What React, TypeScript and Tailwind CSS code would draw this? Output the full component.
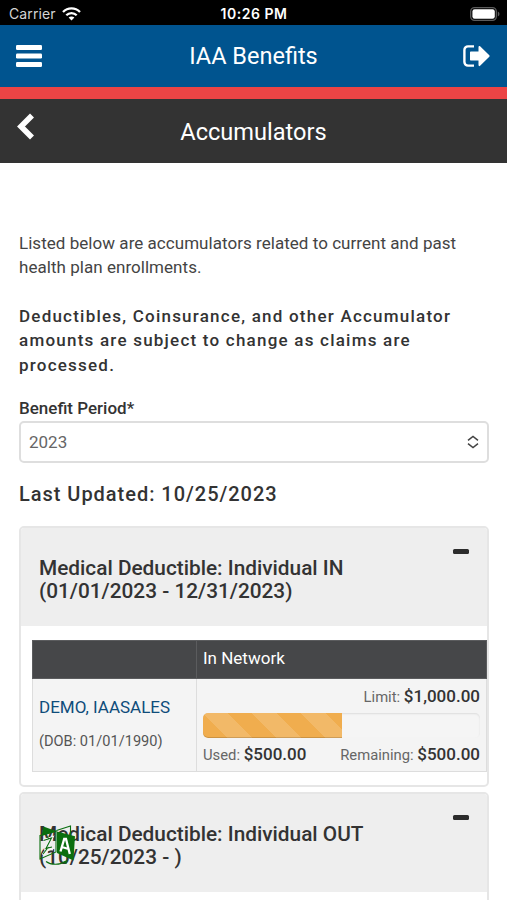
import type { ReactNode } from 'react'

interface AccumulatorPanelProps {
  title: string
  period: string
  children?: ReactNode
}

function StatusBar() {
  return (
    <div className="flex h-[25px] items-center justify-between bg-black pr-[7px] pl-[9px] font-[Inter] text-[14px] text-white">
      <div className="flex w-[101px] items-center gap-[6px] pt-[2px] text-[#d4d4d4]">
        <span className="tracking-[0.1px]">Carrier</span>
        <svg width="19" height="14" viewBox="0 0 19 14" fill="none" stroke="#fff" strokeWidth="2.3">
          <path d="M1 5C5.8.2 13.2.2 18 5" />
          <path d="M4.3 8.3c2.9-2.9 7.5-2.9 10.4 0" />
          <path d="M9.5 13.6 6.6 10.6c1.6-1.6 4.2-1.6 5.8 0z" fill="#fff" stroke="none" />
        </svg>
      </div>
      <span className="pt-[2px] text-[14px] font-semibold tracking-[0.5px]">10:26 PM</span>
      <div className="flex w-[102px] justify-end pt-[2px]">
        <svg width="30" height="14" viewBox="0 0 30 14">
          <rect x="0.7" y="0.7" width="25.6" height="12.6" rx="3.8" fill="none" stroke="#5c5c5c" strokeWidth="1.3" />
          <rect x="2.4" y="2.2" width="22.4" height="9.6" rx="2.2" fill="#fff" />
          <path d="M27.8 4.5c2.2.8 2.2 4.2 0 5z" fill="#5c5c5c" />
        </svg>
      </div>
    </div>
  )
}

function Header() {
  return (
    <>
      <header className="flex h-[62px] items-center justify-between bg-[#00548f] pr-[17px] pl-4 text-white">
        <svg width="26" height="22" viewBox="0 0 26 22" fill="#fff">
          <rect width="26" height="5" rx="1.2" />
          <rect y="8.5" width="26" height="5" rx="1.2" />
          <rect y="17" width="26" height="5" rx="1.2" />
        </svg>
        <h1 className="pt-[2px] pl-[2px] text-[23.5px]">IAA Benefits</h1>
        <svg width="27" height="22" viewBox="0 0 27 22">
          <path d="M11 1.4H5A3.6 3.6 0 0 0 1.4 5v12A3.6 3.6 0 0 0 5 20.6h6" fill="none" stroke="#fff" strokeWidth="2.4" />
          <path d="M8 6.5h7.5V2c0-1 .8-1.4 1.6-.7l9.2 9c.5.5.5 1 0 1.5l-9.2 9c-.8.7-1.6.3-1.6-.7v-4.6H8c-.6 0-1-.4-1-1v-7c0-.6.4-1 1-1z" fill="#fff" />
        </svg>
      </header>
      <div className="h-3 bg-[#ec4445]" />
      <div className="flex h-[64px] items-center justify-between bg-[#333] pr-[17px] pl-[16px] text-white">
        <svg className="mb-[9px]" width="18" height="27" viewBox="0 0 18 27">
          <path d="M16 2.5 5 13.5l11 11" fill="none" stroke="#fff" strokeWidth="5.6" />
        </svg>
        <h2 className="pt-[3px] text-[23.6px]">Accumulators</h2>
        <div className="w-[17px]" />
      </div>
    </>
  )
}

function AccumulatorPanel({ title, period, children }: AccumulatorPanelProps) {
  return (
    <section className="overflow-hidden rounded-[5px] border-2 border-[#e6e6e6] bg-white">
      <div className="flex h-[98px] justify-between bg-[#eee] pr-[18px] pl-[18px]">
        <h3 className="pt-[29px] text-[20.8px] leading-[22.5px] font-medium text-[#333]">
          {title}
          <br />
          {period}
        </h3>
        <div className="mt-[21px] h-[5px] w-4 rounded-[1.5px] bg-[#2c2c2c]" />
      </div>
      {children}
    </section>
  )
}

function UsageBar() {
  return (
    <div className="h-[25px] rounded-[5px] bg-[#f5f5f5] shadow-[inset_0_1px_2px_rgba(0,0,0,0.1)]">
      <div className="h-full w-1/2 rounded-l-[5px] bg-[#f0ad4e] bg-[linear-gradient(45deg,rgba(255,255,255,0.15)_25%,transparent_25%,transparent_50%,rgba(255,255,255,0.15)_50%,rgba(255,255,255,0.15)_75%,transparent_75%)] bg-[length:49px_49px] shadow-[inset_0_-1px_0_rgba(0,0,0,0.15)]" />
    </div>
  )
}

function TranslateIcon() {
  return (
    <svg width="37" height="42" viewBox="0 0 37 42" fill="none" stroke="#0a6e0f" strokeWidth="1.1">
      <path d="M17.5 5.5 31.5 1v9" />
      <path d="M4.5 1.5 18 6.5 2.5 11z" fill="#0a6e0f" stroke="none" />
      <path d="M1 10.5 17 6v21L1 34z" />
      <path d="m4.5 15.5 8-2.5L7 23.5l7 .5M4 30l5.5-7" stroke="#f6f6f6" strokeWidth="3" />
      <path d="m4.5 15.5 8-2.5L7 23.5l6-1.5M4 29l5.5-7M8 11.5l1.5 2" />
      <path d="m18 6.5 18 4.7-1.5 24.3L18 28z" fill="#0a6e0f" stroke="none" />
      <path d="m21.5 26.5 3.7-12.5h1.8l3.8 15M23 22l6.5 2" stroke="#fff" strokeWidth="2.3" />
      <path d="M7 36.5c5 3.8 14 3.8 20-.5M28 34.5l-1 3.8-3.5-1.3" />
    </svg>
  )
}

export default function App() {
  return (
    <div className="relative h-[900px] w-[507px] overflow-hidden bg-white font-[Roboto,sans-serif] text-[#333]">
      <StatusBar />
      <Header />
      <main className="pr-[18px] pl-[19px] pt-[68px]">
        <p className="text-[17px] leading-[24.4px] tracking-[0.04px] text-[#444]">
          Listed below are accumulators related to current and past
          <br />
          health plan enrollments.
        </p>
        <p className="mt-6 text-[17px] leading-[24.5px] font-medium tracking-[1.22px]">
          Deductibles, Coinsurance, and other Accumulator
          <br />
          amounts are subject to change as claims are
          <br />
          processed.
        </p>
        <label className="mt-[19px] block text-[17px] leading-6 font-medium">Benefit Period*</label>
        <div className="mt-px flex h-[42px] items-center justify-between rounded-[5px] border-2 border-[#dedede] pr-[8px] pl-2 text-[17px] text-[#666]">
          2023
          <svg width="12" height="14" viewBox="0 0 12 14" fill="none" stroke="#444" strokeWidth="1.5">
            <path d="m1 5.3 5-3.8 5 3.8M1 8.7l5 3.8 5-3.8" />
          </svg>
        </div>
        <p className="mt-[19px] text-[20px] leading-6 font-medium tracking-[0.97px]">Last Updated: 10/25/2023</p>

        <div className="mt-5 flex flex-col gap-[5px]">
          <AccumulatorPanel title="Medical Deductible: Individual IN" period="(01/01/2023 - 12/31/2023)">
            <div className="pt-[14px] pb-[13px] pl-[11px]">
              <table className="w-[455px] table-fixed border-collapse bg-[#f4f4f4]">
                <thead>
                  <tr className="h-[38px] bg-[#464749] text-left text-[17px] text-white">
                    <th className="w-[164px] border border-[#5b5c5e]" />
                    <th className="border border-[#5b5c5e] px-[6px] pb-[2px] font-normal">In Network</th>
                  </tr>
                </thead>
                <tbody>
                  <tr className="h-[93px]">
                    <td className="border border-[#ddd] px-[6px] align-top">
                      <div className="mt-4 text-[17px] leading-6 text-[#0f4c7a]">DEMO, IAASALES</div>
                      <div className="mt-[12px] text-[14.6px] leading-5 text-[#555]">(DOB: 01/01/1990)</div>
                    </td>
                    <td className="border border-[#ddd] px-[6px] align-top text-[14.8px] leading-6 text-[#666]">
                      <div className="mt-[5px] mb-[4px] text-right">
                        Limit: <span className="text-[17px] font-medium text-[#333]">$1,000.00</span>
                      </div>
                      <UsageBar />
                      <div className="mt-[4px] flex justify-between">
                        <div>
                          Used: <span className="text-[17px] font-medium text-[#333]">$500.00</span>
                        </div>
                        <div>
                          Remaining: <span className="text-[17px] font-medium text-[#333]">$500.00</span>
                        </div>
                      </div>
                    </td>
                  </tr>
                </tbody>
              </table>
            </div>
          </AccumulatorPanel>
          <AccumulatorPanel title="Medical Deductible: Individual OUT" period="(10/25/2023 - )">
            <div className="h-20" />
          </AccumulatorPanel>
        </div>
      </main>
      <div className="absolute top-[825px] left-[39px]">
        <TranslateIcon />
      </div>
    </div>
  )
}
